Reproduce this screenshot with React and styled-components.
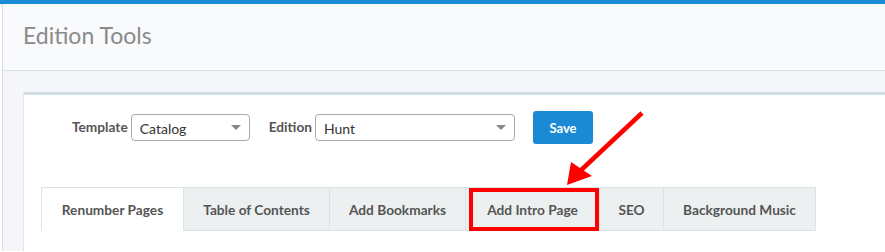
import styled, { createGlobalStyle } from "styled-components";

const GlobalStyle = createGlobalStyle`
    body {
        margin: 0;
        background: #ffffff;
        font-family: Lato, "Liberation Sans", sans-serif;
        overflow: hidden;
    }
`;

const tabs = [
    { label: "Renumber Pages", width: 143, active: true },
    { label: "Table of Contents", width: 146 },
    { label: "Add Bookmarks", width: 136 },
    { label: "Add Intro Page", width: 134, highlighted: true },
    { label: "SEO", width: 64 },
    { label: "Background Music", width: 152 },
];

const App = () => {
    return (
        <>
            <GlobalStyle />
            <TopBar />
            <Panel>
                <Header>
                    <h1>Edition Tools</h1>
                </Header>
                <Body>
                    <Card>
                        <FormRow>
                            <Label>Template</Label>
                            <Select width={119}>
                                <span>Catalog</span>
                                <Caret />
                            </Select>
                            <Label spaced>Edition</Label>
                            <Select width={200}>
                                <span>Hunt</span>
                                <Caret />
                            </Select>
                            <SaveButton>Save</SaveButton>
                        </FormRow>
                        <TabBar>
                            {tabs.map((t) => (
                                <Tab
                                    key={t.label}
                                    width={t.width}
                                    active={t.active}
                                    highlighted={t.highlighted}
                                >
                                    {t.label}
                                </Tab>
                            ))}
                        </TabBar>
                    </Card>
                </Body>
                <Arrow width="90" height="90" viewBox="0 0 90 90">
                    <line x1="86" y1="4" x2="22" y2="64" stroke="#ff0000" strokeWidth="4.5" />
                    <polygon points="11,76 15,53 36,67" fill="#ff0000" />
                </Arrow>
            </Panel>
        </>
    );
};

const TopBar = styled.div`
    height: 4px;
    background: #1a8ad4;
    box-shadow: 0 1px 0 #e6eaee;
`;

const Panel = styled.div`
    position: relative;
    margin-left: 2px;
    border-left: 1px solid #d9dde2;
    background: #f4f6f9;
`;

const Header = styled.div`
    height: 66px;
    padding-left: 20px;
    display: flex;
    align-items: center;
    background: #f9fafc;
    border-bottom: 1px solid #d6e0e8;
    h1 {
        margin: 0;
        font-size: 23px;
        font-weight: 400;
        color: #8a8a8a;
        margin-top: -5px;
    }
`;

const Body = styled.div`
    padding: 21px 0 0 20px;
`;

const Card = styled.div`
    background: #ffffff;
    border-top: 3px solid #cfdce4;
    border-left: 1px solid #dde5ea;
    border-top-left-radius: 3px;
    padding-bottom: 20px;
`;

const FormRow = styled.div`
    display: flex;
    align-items: center;
    padding: 16px 0 0 48px;
`;

const Label = styled.span`
    font-size: 13.7px;
    font-weight: 700;
    color: #555555;
    margin-left: ${(p) => (p.spaced ? "19px" : "0")};
    margin-right: 3px;
    margin-top: -2px;
`;

const Select = styled.div`
    width: ${(p) => p.width}px;
    height: 27px;
    box-sizing: border-box;
    border: 1px solid #aaaaaa;
    border-radius: 4px;
    display: flex;
    align-items: center;
    justify-content: space-between;
    padding: 2px 8px 0 8px;
    span {
        font-size: 14px;
        color: #333333;
    }
`;

const Caret = styled.i`
    width: 0;
    height: 0;
    border-left: 5px solid transparent;
    border-right: 5px solid transparent;
    border-top: 5px solid #888888;
    margin-top: -2px;
`;

const SaveButton = styled.button`
    margin-left: 18px;
    width: 60px;
    height: 33px;
    border: none;
    border-radius: 3px;
    background: #1a8ad4;
    color: #ffffff;
    font-family: inherit;
    font-size: 13px;
    font-weight: 700;
    padding: 0;
`;

const TabBar = styled.div`
    display: flex;
    margin: 43px 0 0 17px;
`;

const Tab = styled.div`
    position: relative;
    width: ${(p) => p.width}px;
    height: 44px;
    box-sizing: border-box;
    display: flex;
    align-items: center;
    justify-content: center;
    font-size: 13.7px;
    font-weight: 700;
    color: #555555;
    background: ${(p) => (p.active ? "#ffffff" : "#ecf0f1")};
    border: 1px solid #dce3e7;
    border-left: ${(p) => (p.active ? "1px solid #dce3e7" : "none")};
    border-bottom: ${(p) => (p.active ? "none" : "1px solid #dce3e7")};
    &::after {
        content: "";
        display: ${(p) => (p.highlighted ? "block" : "none")};
        position: absolute;
        left: 3px;
        right: 0;
        top: 0;
        bottom: -1px;
        border: 4px solid #ff0000;
    }
`;

const Arrow = styled.svg`
    position: absolute;
    left: 553px;
    top: 105px;
`;

export default App;
